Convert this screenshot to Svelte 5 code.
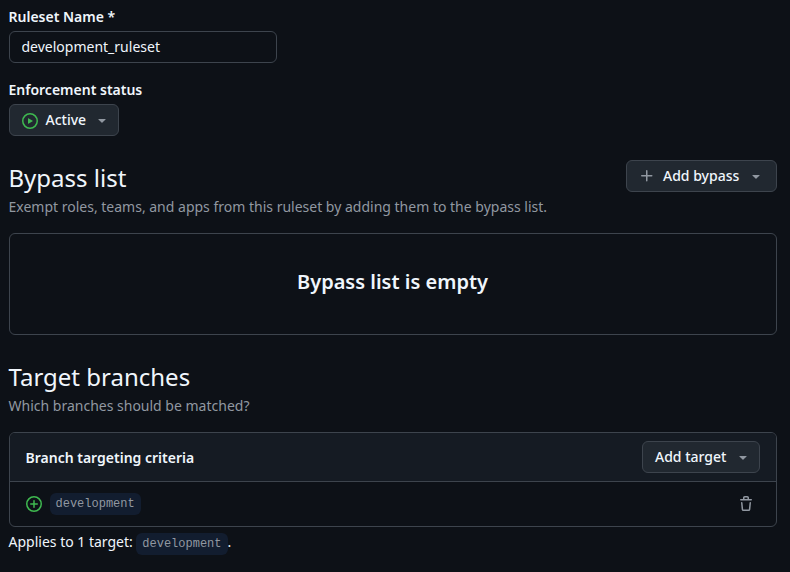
<script>
  let name = $state('development_ruleset');
</script>

{#snippet caret()}
  <svg class="caret" width="16" height="16" viewBox="0 0 16 16"><path d="m4.427 7.427 3.396 3.396a.25.25 0 0 0 .354 0l3.396-3.396A.25.25 0 0 0 11.396 7H4.604a.25.25 0 0 0-.177.427Z" /></svg>
{/snippet}

<main>
  <label for="name">Ruleset Name *</label>
  <input id="name" type="text" bind:value={name} spellcheck="false" />

  <div class="label status">Enforcement status</div>
  <button class="active">
    <svg class="green play" width="16" height="16" viewBox="0 0 16 16"><path d="M8 0a8 8 0 1 1 0 16A8 8 0 0 1 8 0ZM1.5 8a6.5 6.5 0 1 0 13 0 6.5 6.5 0 0 0-13 0Zm4.879-2.773 4.264 2.559a.25.25 0 0 1 0 .428l-4.264 2.559A.25.25 0 0 1 6 10.559V5.442a.25.25 0 0 1 .379-.215Z" /></svg>
    <span>Active</span>
    {@render caret()}
  </button>

  <section class="bypass">
    <header>
      <h2>Bypass list</h2>
      <button class="add-bypass">
        <svg width="16" height="16" viewBox="0 0 16 16"><path d="M7.75 2a.75.75 0 0 1 .75.75V7h4.25a.75.75 0 0 1 0 1.5H8.5v4.25a.75.75 0 0 1-1.5 0V8.5H2.75a.75.75 0 0 1 0-1.5H7V2.75A.75.75 0 0 1 7.75 2Z" /></svg>
        <span>Add bypass</span>
        {@render caret()}
      </button>
    </header>
    <p class="muted">Exempt roles, teams, and apps from this ruleset by adding them to the bypass list.</p>
    <div class="blank"><h3>Bypass list is empty</h3></div>
  </section>

  <section class="targets">
    <h2>Target branches</h2>
    <p class="muted">Which branches should be matched?</p>
    <div class="box">
      <div class="box-head">
        <strong>Branch targeting criteria</strong>
        <button class="add-target"><span>Add target</span>{@render caret()}</button>
      </div>
      <div class="row">
        <svg class="green" width="16" height="16" viewBox="0 0 16 16"><path d="M8 0a8 8 0 1 1 0 16A8 8 0 0 1 8 0ZM1.5 8a6.5 6.5 0 1 0 13 0 6.5 6.5 0 0 0-13 0Zm7.25-3.25v2.5h2.5a.75.75 0 0 1 0 1.5h-2.5v2.5a.75.75 0 0 1-1.5 0v-2.5h-2.5a.75.75 0 0 1 0-1.5h2.5v-2.5a.75.75 0 0 1 1.5 0Z" /></svg>
        <code class="branch">development</code>
        <svg class="trash" width="16" height="16" viewBox="0 0 16 16"><path d="M11 1.75V3h2.25a.75.75 0 0 1 0 1.5H2.75a.75.75 0 0 1 0-1.5H5V1.75C5 .784 5.784 0 6.75 0h2.5C10.216 0 11 .784 11 1.75ZM4.496 6.675l.66 6.6a.25.25 0 0 0 .249.225h5.19a.25.25 0 0 0 .249-.225l.66-6.6a.75.75 0 0 1 1.492.149l-.66 6.6A1.748 1.748 0 0 1 10.595 15h-5.19a1.75 1.75 0 0 1-1.741-1.575l-.66-6.6a.75.75 0 1 1 1.492-.15ZM6.5 1.75V3h3V1.75a.25.25 0 0 0-.25-.25h-2.5a.25.25 0 0 0-.25.25Z" /></svg>
      </div>
    </div>
    <div class="applies"><span>Applies to 1 target:</span><code>development</code><span>.</span></div>
  </section>
</main>

<style>
  :global(body) { margin: 0; background: #0d1117; }
  main {
    box-sizing: border-box;
    height: 572px;
    padding: 6px 13.5px 0 8.5px;
    overflow: hidden;
    background: #0d1117;
    color: #f0f6fc;
    font: 14px/21px "Noto Sans", sans-serif;
  }
  h2, h3, p { margin: 0; }
  label, .label { display: block; font-weight: 600; }
  .status { margin-top: 16px; }
  input {
    display: block;
    box-sizing: border-box;
    width: 268px;
    height: 32px;
    margin-top: 4px;
    padding: 0 12px 2px;
    border: 1px solid #3d444d;
    border-radius: 6px;
    outline: none;
    background: #0d1117;
    color: #f0f6fc;
    font: inherit;
  }
  button {
    display: flex;
    align-items: center;
    box-sizing: border-box;
    height: 32px;
    padding: 0 8px 0 12px;
    border: 1px solid #3d444d;
    border-radius: 6px;
    background: #212830;
    color: #f0f6fc;
    font: 500 14px/20px "Noto Sans", sans-serif;
    white-space: nowrap;
  }
  svg { display: block; flex: none; fill: #9198a1; }
  .green { fill: #3fb950; }
  .play { margin-top: 2px; }
  .caret { margin-left: auto; }
  .active { width: 110px; margin-top: 4px; }
  .active span { margin-left: 8px; }
  .bypass { margin-top: 24px; }
  header { display: flex; justify-content: space-between; height: 36px; }
  .add-bypass { width: 151px; padding-right: 12px; }
  .add-bypass span { margin-left: 8.5px; }
  h2 { font-size: 24px; font-weight: 400; line-height: 36px; }
  .muted { color: #9198a1; }
  .blank {
    display: flex;
    justify-content: center;
    box-sizing: border-box;
    height: 102px;
    margin-top: 16px;
    padding-top: 33px;
    border: 1px solid #3d444d;
    border-radius: 6px;
  }
  h3 { font-size: 20px; font-weight: 600; line-height: 30px; }
  .targets { margin-top: 24px; }
  .box {
    box-sizing: border-box;
    height: 95px;
    margin-top: 16px;
    border: 1px solid #3d444d;
    border-radius: 6px;
    overflow: hidden;
  }
  .box-head {
    display: flex;
    align-items: center;
    justify-content: space-between;
    box-sizing: border-box;
    height: 49px;
    padding: 0 16px;
    border-bottom: 1px solid #3d444d;
    background: #151b23;
  }
  strong { font-weight: 600; }
  .add-target { width: 118px; }
  .add-target span { margin-left: 0.5px; }
  .row { display: flex; align-items: center; height: 44px; padding: 0 22px 0 16px; }
  code {
    padding: 0 6px;
    border-radius: 6px;
    background: #121d2f;
    color: #9198a1;
    font: 12px/22px "Liberation Mono", monospace;
  }
  .branch { margin-left: 8px; }
  .trash { margin-left: auto; }
  .applies { display: flex; margin-top: 4px; }
  .applies code { margin: 2px 0 0 3.5px; }
</style>
